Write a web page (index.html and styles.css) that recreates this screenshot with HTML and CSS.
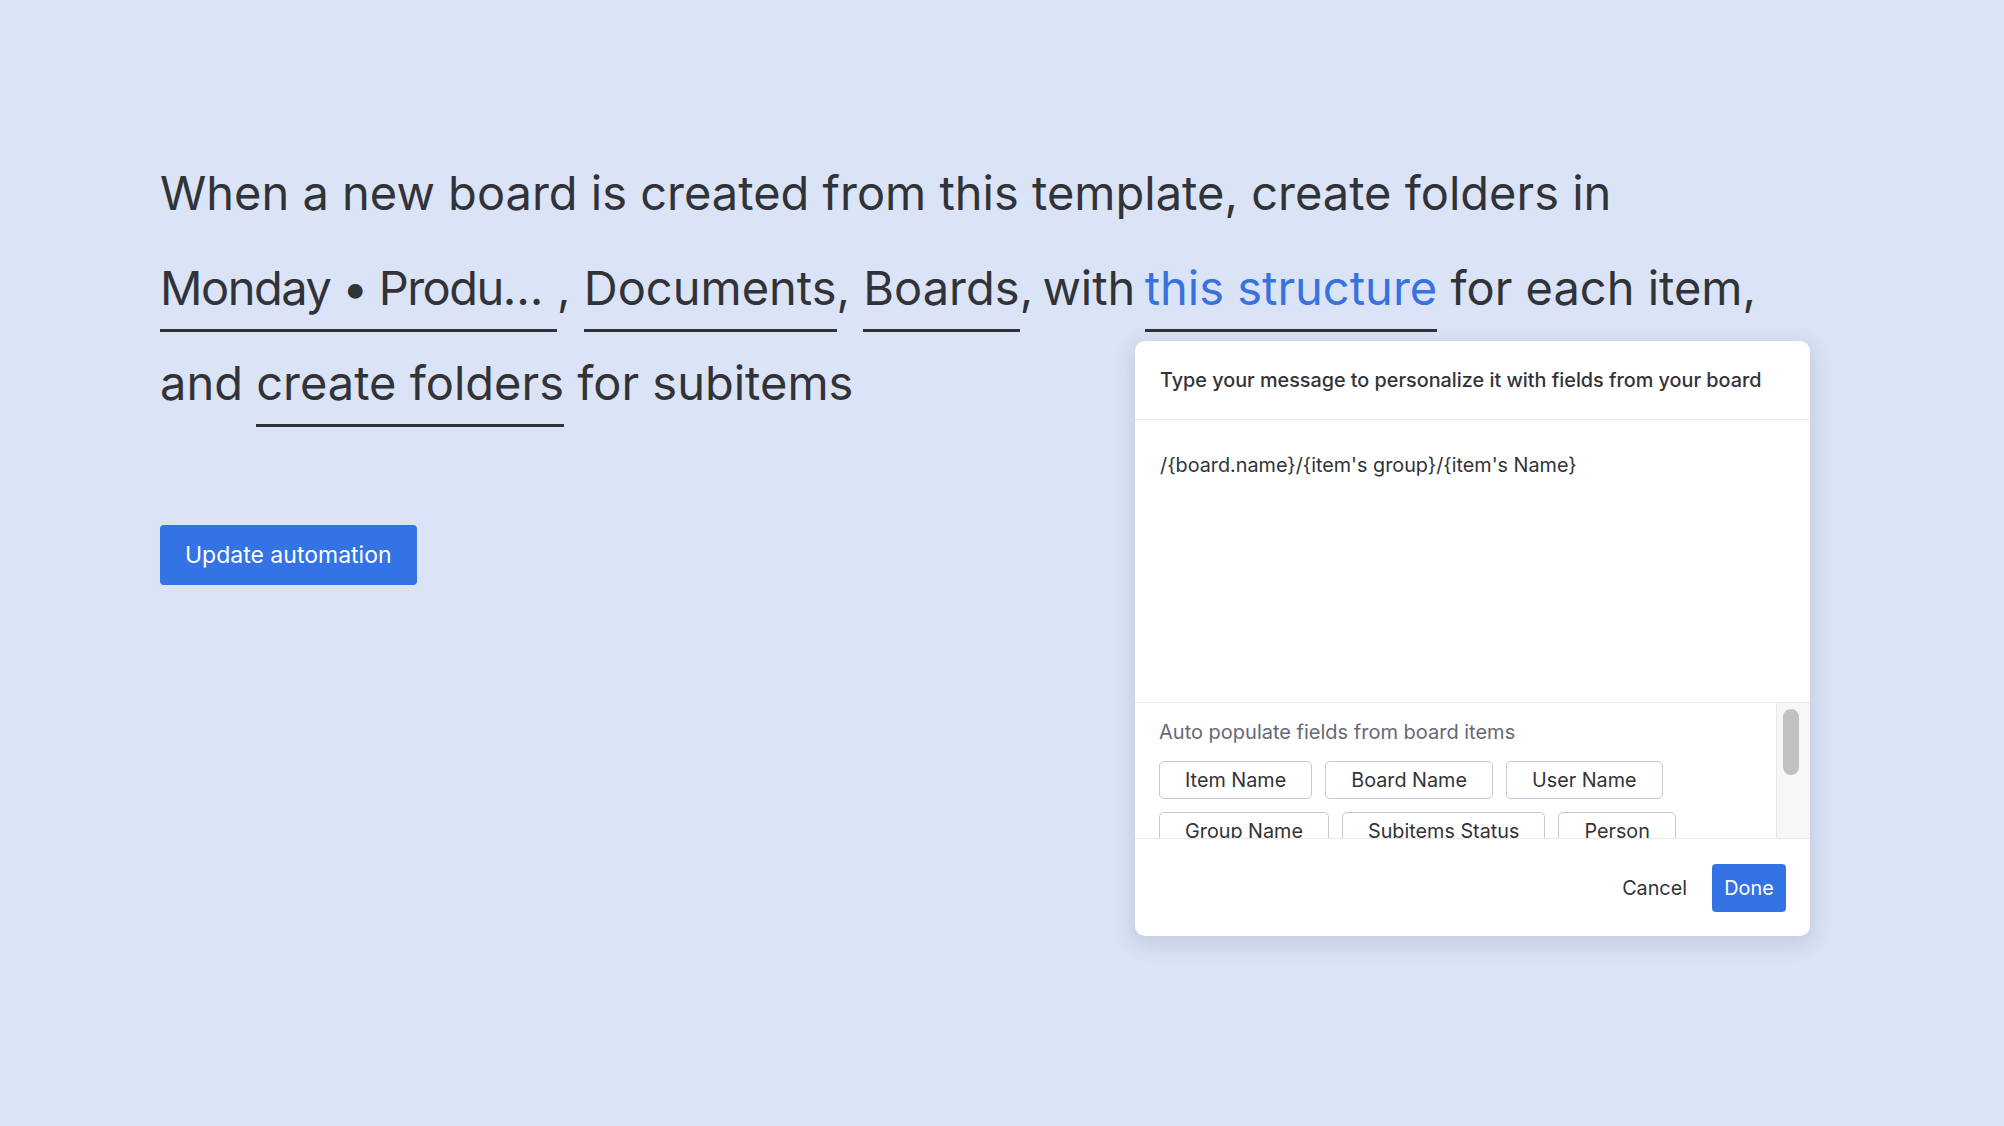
FILE: index.html
```html
<!DOCTYPE html>
<html lang="en">
<head>
  <meta charset="UTF-8" />
  <meta name="viewport" content="width=device-width, initial-scale=1.0" />
  <title>Folder structure automation</title>
  <link rel="stylesheet" href="styles.css">
</head>
<body>
  <main class="page">
    <p class="sentence">
      When a new board is created from this template, create folders in<br>
      <span class="pick pick-workspace">Monday • Produ…</span>, <span class="pick">Documents</span>, <span class="pick">Boards</span>,<span class="tight"> with </span><span class="pick link">this structure</span> for each item,<br>
      and <span class="pick">create folders</span> for subitems
    </p>

    <button class="primary-btn">Update automation</button>
  </main>

  <div class="dialog">
    <div class="dialog-header">Type your message to personalize it with fields from your board</div>

    <div class="dialog-editor">/{board.name}/{item's group}/{item's Name}</div>

    <div class="dialog-fields">
      <div class="fields-list">
        <div class="fields-label">Auto populate fields from board items</div>
        <div class="chips">
          <span class="chip">Item Name</span>
          <span class="chip">Board Name</span>
          <span class="chip">User Name</span>
          <span class="chip">Group Name</span>
          <span class="chip">Subitems Status</span>
          <span class="chip">Person</span>
          <span class="chip">Due Date</span>
          <span class="chip">Status</span>
        </div>
      </div>
      <div class="scroll-track"><div class="scroll-thumb"></div></div>
    </div>

    <div class="dialog-footer">
      <button class="text-btn">Cancel</button>
      <button class="done-btn">Done</button>
    </div>
  </div>
</body>
</html>
```

FILE: styles.css
```css
body {
  margin: 0;
  background: #dbe4f6;
  color: #323338;
  font-family: Inter, "Noto Sans", sans-serif;
}

.page {
  padding: 145px 0 0 160px;
}

.sentence {
  margin: 0;
  font-size: 47px;
  line-height: 95px;
  font-weight: 400;
}

.pick {
  display: inline-block;
  line-height: 1;
  padding-bottom: 18px;
  border-bottom: 3px solid #323338;
}
.pick-workspace {
  padding-right: 15px;
  letter-spacing: -1.5px;
}
.tight {
  word-spacing: -4px;
}
.link {
  color: #3872e0;
}

.primary-btn {
  margin-top: 95px;
  height: 60px;
  padding: 0 25px;
  border: none;
  border-radius: 4px;
  background: #3373e3;
  color: #fff;
  font-family: inherit;
  font-size: 23px;
}

.dialog {
  position: absolute;
  left: 1135px;
  top: 341px;
  width: 675px;
  height: 595px;
  background: #fff;
  border-radius: 10px;
  box-shadow: 0 6px 20px 4px rgba(40, 50, 80, 0.12);
  display: flex;
  flex-direction: column;
  overflow: hidden;
  font-size: 19.8px;
}

.dialog-header {
  height: 78px;
  padding: 0 25px;
  display: flex;
  align-items: center;
  border-bottom: 1px solid #e6e9ef;
  font-weight: 500;
}

.dialog-editor {
  height: 249px;
  padding: 33px 25px 0;
  line-height: 24px;
}

.dialog-fields {
  height: 135px;
  border-top: 1px solid #e6e9ef;
  display: flex;
}

.fields-list {
  flex: 1;
  overflow: hidden;
  padding: 16px 24px 0;
}

.fields-label {
  font-size: 20px;
  line-height: 26px;
  color: #676879;
  margin-bottom: 16px;
}

.chips {
  display: flex;
  flex-wrap: wrap;
  gap: 13px;
}

.chip {
  box-sizing: border-box;
  height: 38px;
  padding: 0 25px;
  display: flex;
  align-items: center;
  border: 1px solid #c5c7d4;
  border-radius: 5px;
}

.scroll-track {
  width: 22px;
  padding: 6px 5px 0 6px;
  background: #f7f7f7;
  border-left: 1px solid #e8e8e8;
}

.scroll-thumb {
  width: 16px;
  height: 66px;
  border-radius: 8px;
  background: #c1c1c1;
}

.dialog-footer {
  flex: 1;
  border-top: 1px solid #e6e9ef;
  display: flex;
  align-items: center;
  justify-content: flex-end;
  gap: 25px;
  padding: 0 24px;
}

.text-btn {
  border: none;
  background: none;
  padding: 0;
  color: #323338;
  font-family: inherit;
  font-size: inherit;
}

.done-btn {
  width: 74px;
  height: 48px;
  border: none;
  border-radius: 4px;
  background: #3373e3;
  color: #fff;
  font-family: inherit;
  font-size: inherit;
}
```
